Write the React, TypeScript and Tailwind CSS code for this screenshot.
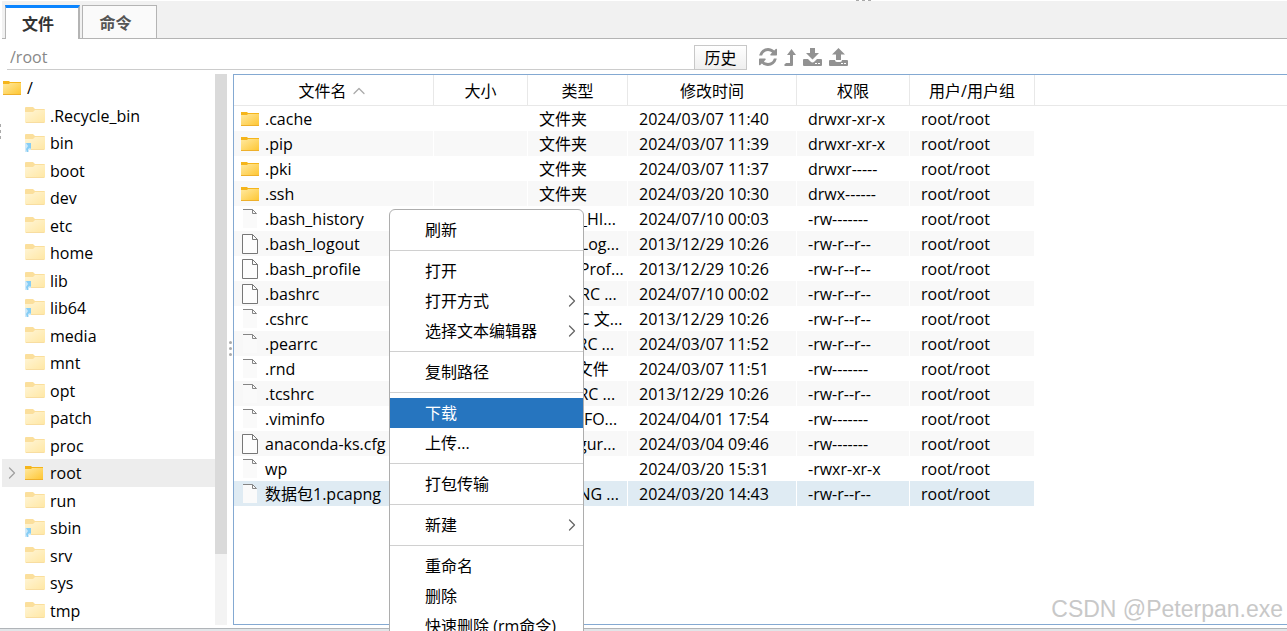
import React, { useState } from 'react';
import { ChevronRight, ChevronUp } from 'lucide-react';

interface TreeNode {
  name: string;
  link?: boolean;
}

interface FileRow {
  name: string;
  icon: 'folder' | 'page' | 'blank';
  type: string;
  time: string;
  mode: string;
}

interface MenuEntry {
  label: string;
  submenu?: boolean;
}

const tree: TreeNode[] = [
  { name: '.Recycle_bin' },
  { name: 'bin', link: true },
  { name: 'boot' },
  { name: 'dev' },
  { name: 'etc' },
  { name: 'home' },
  { name: 'lib', link: true },
  { name: 'lib64', link: true },
  { name: 'media' },
  { name: 'mnt' },
  { name: 'opt' },
  { name: 'patch' },
  { name: 'proc' },
  { name: 'root' },
  { name: 'run' },
  { name: 'sbin', link: true },
  { name: 'srv' },
  { name: 'sys' },
  { name: 'tmp' },
];

const files: FileRow[] = [
  { name: '.cache', icon: 'folder', type: '文件夹', time: '2024/03/07 11:40', mode: 'drwxr-xr-x' },
  { name: '.pip', icon: 'folder', type: '文件夹', time: '2024/03/07 11:39', mode: 'drwxr-xr-x' },
  { name: '.pki', icon: 'folder', type: '文件夹', time: '2024/03/07 11:37', mode: 'drwxr-----' },
  { name: '.ssh', icon: 'folder', type: '文件夹', time: '2024/03/20 10:30', mode: 'drwx------' },
  { name: '.bash_history', icon: 'blank', type: 'BASH_HI...', time: '2024/07/10 00:03', mode: '-rw-------' },
  { name: '.bash_logout', icon: 'page', type: 'Bash Log...', time: '2013/12/29 10:26', mode: '-rw-r--r--' },
  { name: '.bash_profile', icon: 'page', type: 'Bash Prof...', time: '2013/12/29 10:26', mode: '-rw-r--r--' },
  { name: '.bashrc', icon: 'page', type: 'BASHRC ...', time: '2024/07/10 00:02', mode: '-rw-r--r--' },
  { name: '.cshrc', icon: 'blank', type: 'CSHRC 文...', time: '2013/12/29 10:26', mode: '-rw-r--r--' },
  { name: '.pearrc', icon: 'blank', type: 'PEARRC ...', time: '2024/03/07 11:52', mode: '-rw-r--r--' },
  { name: '.rnd', icon: 'blank', type: 'RND 文件', time: '2024/03/07 11:51', mode: '-rw-------' },
  { name: '.tcshrc', icon: 'blank', type: 'TCSHRC ...', time: '2013/12/29 10:26', mode: '-rw-r--r--' },
  { name: '.viminfo', icon: 'blank', type: 'VIMINFO...', time: '2024/04/01 17:54', mode: '-rw-------' },
  { name: 'anaconda-ks.cfg', icon: 'page', type: 'Configur...', time: '2024/03/04 09:46', mode: '-rw-------' },
  { name: 'wp', icon: 'blank', type: '', time: '2024/03/20 15:31', mode: '-rwxr-xr-x' },
  { name: '数据包1.pcapng', icon: 'blank', type: 'PCAPNG ...', time: '2024/03/20 14:43', mode: '-rw-r--r--' },
];

const menuGroups: MenuEntry[][] = [
  [{ label: '刷新' }],
  [{ label: '打开' }, { label: '打开方式', submenu: true }, { label: '选择文本编辑器', submenu: true }],
  [{ label: '复制路径' }],
  [{ label: '下载' }, { label: '上传...' }],
  [{ label: '打包传输' }],
  [{ label: '新建', submenu: true }],
  [{ label: '重命名' }, { label: '删除' }, { label: '快速删除 (rm命令)' }],
];

const FolderIcon: React.FC = () => (
  <svg className="shrink-0" width="18" height="14" viewBox="0 0 18 14" aria-hidden="true">
    <defs>
      <linearGradient id="folder" x1="0" y1="0" x2="1" y2="1">
        <stop offset="0" stopColor="#ffe9a0" />
        <stop offset="1" stopColor="#fec52f" />
      </linearGradient>
    </defs>
    <path d="M0 0h6l1 1h11v3H0z" fill="#f5b51b" />
    <path d="M0 3h6l1-1h11v12H0z" fill="url(#folder)" />
    <path d="M0 13h18v1H0z" fill="#eeb02c" />
  </svg>
);

const PaleFolderIcon: React.FC<{ link?: boolean }> = ({ link }) => (
  <svg className="shrink-0" width="20" height="18" viewBox="0 0 20 18" aria-hidden="true">
    <defs>
      <linearGradient id="paleFolder" x1="0" y1="0" x2="1" y2="1">
        <stop offset="0" stopColor="#fff5d6" />
        <stop offset="1" stopColor="#ffe7a3" />
      </linearGradient>
    </defs>
    <path d="M0 1q0-1 1-1h7l2 2h9q1 0 1 1v3H0z" fill="#fbdf9c" />
    <path d="M0 5h8l2-2h10v12q0 1-1 1H1q-1 0-1-1z" fill="url(#paleFolder)" />
    <path d="M1 15h18v1H1z" fill="#f8dda0" />
    {link && (
      <>
        <path d="M0 9h6v7H4v2H0z" fill="#cfe9f8" />
        <path d="M1 9h5v6l-1-1-2 1v3H2l-1-3 2-3z" fill="#86cdf5" />
      </>
    )}
  </svg>
);

const PageIcon: React.FC<{ outlined: boolean }> = ({ outlined }) => (
  <svg className="shrink-0" width="18" height="20" viewBox="0 0 18 20" aria-hidden="true">
    {outlined ? (
      <>
        <path d="M1.5.5h10l5 5v14h-15z" fill="#fdfdfd" stroke="#777" />
        <path d="M11.5.5v5h5" fill="none" stroke="#777" />
      </>
    ) : (
      <>
        <path d="M2 1h10l4 4v14H2z" fill="#fafafa" />
        <path d="M2 .5h9.500M11.500.5v4h4M11.500.5l4 4" fill="none" stroke="#858585" />
      </>
    )}
  </svg>
);

const RefreshIcon: React.FC = () => (
  <svg width="18" height="18" viewBox="0 0 1536 1536" fill="currentColor" aria-hidden="true">
    <path d="M1511 928q0 5-1 7-64 268-268 434.500T764 1536q-146 0-282.500-55T238 1324l-129 129q-19 19-45 19t-45-19-19-45V960q0-26 19-45t45-19h448q26 0 45 19t19 45-19 45l-137 137q71 66 161 102t187 36q134 0 250-65t186-179q11-17 53-117 8-23 30-23h192q13 0 22.500 9.500t9.500 22.500zm25-800v448q0 26-19 45t-45 19h-448q-26 0-45-19t-19-45 19-45l138-138Q969 256 768 256q-134 0-250 65T332 500q-11 17-53 117-8 23-30 23H50q-13 0-22.500-9.500T18 608v-7q65-268 270-434.500T768 0q146 0 284 55.500T1297 212l130-129q19-19 45-19t45 19 19 45z" />
  </svg>
);

const LevelUpIcon: React.FC = () => (
  <svg width="12" height="17" viewBox="0 0 12 17" fill="currentColor" aria-hidden="true">
    <path d="M7.500 0L12 6H9v10q0 1-1 1H1l-1-1 2-2h4V6H3z" />
  </svg>
);

const DownloadIcon: React.FC = () => (
  <svg width="19" height="18" viewBox="0 0 19 18" fill="currentColor" aria-hidden="true">
    <path d="M7 0h5v5h4l-6.500 6.500L3 5h4z" />
    <path fillRule="evenodd" d="M1 11h4l2.500 2.500q2 2 4 0L14 11h4q1 0 1 1v5q0 1-1 1H1q-1 0-1-1v-5q0-1 1-1zM12 15v1h2v-1zM15 15v1h2v-1z" />
  </svg>
);

const UploadIcon: React.FC = () => (
  <svg width="19" height="18" viewBox="0 0 19 18" fill="currentColor" aria-hidden="true">
    <path d="M9.500 0L16 6.500h-4V12H7V6.500H3z" />
    <path fillRule="evenodd" d="M1 12h5q0 2 2 2h3q2 0 2-2h5q1 0 1 1v4q0 1-1 1H1q-1 0-1-1v-4q0-1 1-1zM12 15v1h2v-1zM15 15v1h2v-1z" />
  </svg>
);

const tools = [
  { label: '刷新目录', icon: <RefreshIcon /> },
  { label: '上级目录', icon: <LevelUpIcon /> },
  { label: '下载文件', icon: <DownloadIcon /> },
  { label: '上传文件', icon: <UploadIcon /> },
];

const headCell = 'border-r border-b border-[#e8e8e8] pt-[2px] font-normal';
const bodyCell = 'truncate border-r border-white pl-[11px]';

const App: React.FC = () => {
  const [path, setPath] = useState('/root');
  const [selected, setSelected] = useState('数据包1.pcapng');
  const [active, setActive] = useState('下载');

  return (
    <div className="relative flex h-screen flex-col overflow-hidden bg-white font-['Open_Sans','Noto_Sans_CJK_SC',sans-serif] text-base leading-6 text-black">
      {/* Splitter grips of the surrounding window */}
      <div className="absolute top-0 left-[856px] flex gap-[3px]">
        <i className="h-px w-[3px] bg-[#aaa]" />
        <i className="h-px w-[3px] bg-[#aaa]" />
        <i className="h-px w-[3px] bg-[#aaa]" />
      </div>
      <div className="absolute top-[124px] left-0 flex flex-col gap-[3px]">
        <i className="h-[3px] w-px bg-[#aaa]" />
        <i className="h-[3px] w-px bg-[#aaa]" />
        <i className="h-[3px] w-px bg-[#aaa]" />
      </div>

      {/* Tabs */}
      <div className="mt-px ml-[2px] flex h-[38px] shrink-0 items-end border-b border-[#b4b4b4] bg-[#f1f1f1] pl-[3px]">
        <button className="-mb-px h-[34px] w-[75px] border-t-3 border-r-2 border-l border-t-[#0a84ff] border-r-[#b4b4b4] border-l-[#b4b4b4] bg-white pr-2 font-bold text-[#333]">
          文件
        </button>
        <button className="ml-[2px] h-[33px] w-[75px] border border-b-0 border-[#b4b4b4] bg-[#fafafa] pt-[2px] pr-2 font-bold text-[#555]">
          命令
        </button>
      </div>

      {/* Path bar */}
      <div className="flex h-[35px] shrink-0 items-start pt-[6px] pl-[7px]">
        <div className="flex h-[25px] w-[740px] border-b border-[#ccc]">
          <input
            aria-label="路径"
            value={path}
            onChange={(e) => setPath(e.target.value)}
            className="min-w-0 flex-1 pl-[3px] text-[#888] outline-none"
          />
          <button className="h-[25px] w-[53px] border border-[#c8c8c8] bg-linear-to-b from-white to-[#efefef]">
            历史
          </button>
        </div>
        <div className="ml-3 flex h-6 items-center gap-[7px] text-[#929292]">
          {tools.map((tool) => (
            <button key={tool.label} aria-label={tool.label}>
              {tool.icon}
            </button>
          ))}
        </div>
      </div>

      <div className="flex min-h-0 flex-1">
        {/* Directory tree */}
        <nav className="w-[215px] shrink-0 overflow-hidden pl-[2px]">
          <div className="flex h-7 items-center gap-[6px] pl-px">
            <FolderIcon />
            <span>/</span>
          </div>
          <ul>
            {tree.map((node) => (
              <li
                key={node.name}
                className={`flex items-center odd:h-[27px] even:h-7 ${node.name === 'root' ? 'bg-[#ededed]' : ''}`}
              >
                <span className="flex w-[23px] shrink-0">
                  {node.name === 'root' && <ChevronRight className="h-5 w-5 text-[#a0a0a0]" strokeWidth={1.500} />}
                </span>
                <span className="flex w-[25px] shrink-0">
                  {node.name === 'root' ? <FolderIcon /> : <PaleFolderIcon link={node.link} />}
                </span>
                {node.name}
              </li>
            ))}
          </ul>
        </nav>
        <div className="mb-[3px] w-3 shrink-0 bg-[#f3f3f3]">
          <div className="h-[480px] bg-[#dadada]" />
        </div>
        <div className="mb-[6px] flex w-[6px] shrink-0 flex-col items-center justify-center gap-[3px]">
          <i className="h-[3px] w-[3px] rounded-full bg-[#aaa]" />
          <i className="h-[3px] w-[3px] rounded-full bg-[#aaa]" />
          <i className="h-[3px] w-[3px] rounded-full bg-[#aaa]" />
        </div>

        {/* File list */}
        <main className="mb-[3px] min-w-0 flex-1 overflow-hidden border border-r-0 border-[#84a9d2]">
          <table className="w-full table-fixed border-separate border-spacing-0">
            <colgroup>
              <col className="w-[200px]" />
              <col className="w-[94px]" />
              <col className="w-[100px]" />
              <col className="w-[169px]" />
              <col className="w-[113px]" />
              <col className="w-[125px]" />
              <col />
            </colgroup>
            <thead>
              <tr className="h-[31px]">
                <th className={headCell}>
                  <span className="flex items-center justify-center gap-[2px]">
                    文件名
                    <ChevronUp className="h-5 w-5 text-[#aaa]" strokeWidth={1.500} />
                  </span>
                </th>
                <th className={headCell}>大小</th>
                <th className={headCell}>类型</th>
                <th className={headCell}>修改时间</th>
                <th className={headCell}>权限</th>
                <th className={headCell}>用户/用户组</th>
                <td className="border-b border-[#e8e8e8]" />
              </tr>
            </thead>
            <tbody>
              {files.map((file, i) => {
                const shade = file.name === selected ? 'bg-[#dfebf3]' : i % 2 ? 'bg-[#f8f8f8]' : '';
                const cell = `${bodyCell} ${shade}`;
                return (
                  <tr key={file.name} className="h-[25px]" onClick={() => setSelected(file.name)}>
                    <td className={`border-r border-white pl-[7px] ${shade}`}>
                      <span className="flex items-center gap-[6px]">
                        {file.icon === 'folder' ? <FolderIcon /> : <PageIcon outlined={file.icon === 'page'} />}
                        {file.name}
                      </span>
                    </td>
                    <td className={cell} />
                    <td className={cell}>{file.type}</td>
                    <td className={cell}>{file.time}</td>
                    <td className={cell}>{file.mode}</td>
                    <td className={cell}>root/root</td>
                    <td />
                  </tr>
                );
              })}
            </tbody>
          </table>
        </main>
      </div>

      {/* Bottom edge */}
      <div className="h-[3px] shrink-0 border-t border-[#b0b4b8] bg-[#e1e5e8]" />

      {/* Context menu */}
      <div
        role="menu"
        className="absolute top-[209px] left-[389px] w-[195px] rounded-md border border-[#adadad] bg-white py-[5px]"
      >
        {menuGroups.map((group, g) => (
          <React.Fragment key={group[0].label}>
            {g > 0 && <hr className="my-[5px] h-px border-0 bg-[#d0d0d0]" />}
            {group.map((entry) => (
              <button
                key={entry.label}
                role="menuitem"
                onMouseEnter={() => setActive(entry.label)}
                className={`flex h-[30px] w-full items-center justify-between pr-px pl-[35px] ${
                  active === entry.label ? 'bg-[#2675bf] text-white' : ''
                }`}
              >
                {entry.label}
                {entry.submenu && <ChevronRight className="h-5 w-5 text-[#666]" strokeWidth={1.500} />}
              </button>
            ))}
          </React.Fragment>
        ))}
      </div>

      {/* Watermark */}
      <div className="pointer-events-none absolute right-1 bottom-[6px] font-['Liberation_Sans',sans-serif] text-[23px] leading-8 text-[#c8c8c8]">
        CSDN @Peterpan.exe
      </div>
    </div>
  );
};

export default App;
